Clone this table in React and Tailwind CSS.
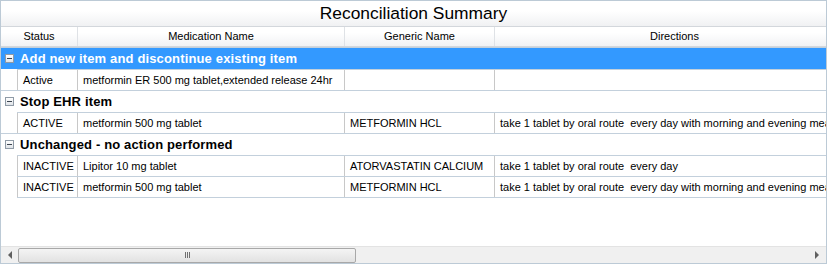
import React from 'react';

const columns = [
    { key: 'status', label: 'Status', width: 'w-[77px]' },
    { key: 'name', label: 'Medication Name', width: 'w-[267px]' },
    { key: 'generic', label: 'Generic Name', width: 'w-[150px]' },
    { key: 'directions', label: 'Directions', width: 'w-[360px]' },
];

const groups = [
    {
        title: 'Add new item and discontinue existing item',
        selected: true,
        rows: [
            { status: 'Active', name: 'metformin ER 500 mg tablet,extended release 24hr', generic: '', directions: '' },
        ],
    },
    {
        title: 'Stop EHR item',
        rows: [
            { status: 'ACTIVE', name: 'metformin 500 mg tablet', generic: 'METFORMIN HCL', directions: 'take 1 tablet by oral route  every day with morning and evening meals' },
        ],
    },
    {
        title: 'Unchanged - no action performed',
        rows: [
            { status: 'INACTIVE', name: 'Lipitor 10 mg tablet', generic: 'ATORVASTATIN CALCIUM', directions: 'take 1 tablet by oral route  every day' },
            { status: 'INACTIVE', name: 'metformin 500 mg tablet', generic: 'METFORMIN HCL', directions: 'take 1 tablet by oral route  every day with morning and evening meals' },
        ],
    },
];

const cellWidths = {
    status: 'w-[61px]',
    name: 'w-[267px]',
    generic: 'w-[150px]',
    directions: 'w-[360px]',
};

const MinusBox = () => (
    <div className="w-[9px] h-[9px] border border-[#8f9aa6] bg-gradient-to-b from-white to-[#dfe3e8] flex items-center justify-center shrink-0">
        <div className="w-[5px] h-px bg-[#3c4550]" />
    </div>
);

const GroupRow = ({ group }) => (
    <div className={`h-[22px] border-t border-[#c3d0dc] flex items-center pl-[4px] ${group.selected ? 'bg-[#3399ff] text-white' : 'bg-white text-black'}`}>
        <MinusBox />
        <span className="ml-[6px] text-[13px] font-bold tracking-[0.15px] leading-none">{group.title}</span>
    </div>
);

const DataRow = ({ row, last }) => (
    <div className="flex pl-[16px]">
        <div className={`flex border-t border-[#c3d0dc] ${last ? 'border-b h-[22px]' : 'h-[21px]'}`}>
            {Object.keys(cellWidths).map((key, i) => (
                <div
                    key={key}
                    className={`${cellWidths[key]} shrink-0 border-r border-[#c8c8c8] ${i === 0 ? 'border-l' : ''} flex items-center pl-[5px] whitespace-pre overflow-hidden text-[11px]`}
                >
                    {row[key]}
                </div>
            ))}
        </div>
    </div>
);

export default function App() {
    return (
        <div
            className="w-[827px] h-[264px] border border-[#bccad6] bg-white flex flex-col overflow-hidden text-black"
            style={{ fontFamily: '"Liberation Sans", Arial, sans-serif' }}
        >
            {/* title */}
            <div className="h-[26px] shrink-0 border-b border-[#d3d7dc] bg-gradient-to-b from-white from-40% to-[#f0f1f3] flex items-center justify-center">
                <span className="text-[17.4px] leading-none">Reconciliation Summary</span>
            </div>

            {/* column headers */}
            <div className="h-[20px] shrink-0 border-b border-[#d3d7dc] bg-gradient-to-b from-white from-30% to-[#f1f2f4] flex overflow-hidden">
                {columns.map((col) => (
                    <div
                        key={col.key}
                        className={`${col.width} shrink-0 border-r border-[#dfe2e6] flex items-center justify-center text-[11px]`}
                    >
                        {col.label}
                    </div>
                ))}
            </div>

            {/* grouped rows */}
            <div className="flex-1 overflow-hidden">
                {groups.map((group, gi) => (
                    <div key={gi}>
                        <GroupRow group={group} />
                        {group.rows.map((row, ri) => (
                            <DataRow key={ri} row={row} last={gi === groups.length - 1 && ri === group.rows.length - 1} />
                        ))}
                    </div>
                ))}
            </div>

            {/* horizontal scrollbar */}
            <div className="h-[17px] shrink-0 border-t border-[#e3e3e3] bg-[#f0f0f0] flex items-center">
                <div className="w-[17px] h-full flex items-center justify-center">
                    <div className="w-0 h-0 border-y-[4px] border-y-transparent border-r-[4px] border-r-[#606060]" />
                </div>
                <div className="w-[338px] h-[15px] rounded-[2px] border border-[#a8a8a8] bg-gradient-to-b from-[#f4f4f4] to-[#e2e2e2] flex items-center justify-center gap-[1px]">
                    <div className="w-px h-[6px] bg-[#707070]" />
                    <div className="w-px h-[6px] bg-[#707070]" />
                    <div className="w-px h-[6px] bg-[#707070]" />
                </div>
                <div className="flex-1" />
                <div className="w-[19px] h-full flex items-center justify-center">
                    <div className="w-0 h-0 border-y-[4px] border-y-transparent border-l-[4px] border-l-[#606060]" />
                </div>
            </div>
        </div>
    );
}
